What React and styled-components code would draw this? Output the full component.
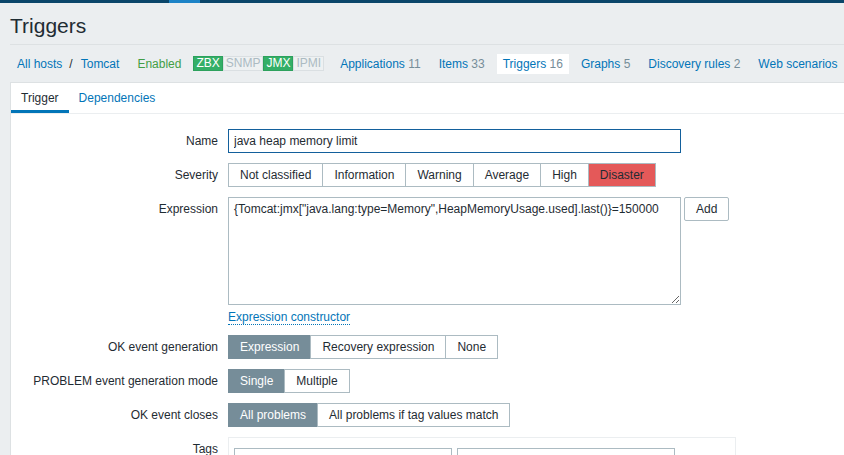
import styled, { createGlobalStyle } from "styled-components";

const GlobalStyle = createGlobalStyle`
* {
  box-sizing : border-box;
}
body {
  margin : 0;
  background-color : #ebeef0;
  font-family : "Liberation Sans", Arial, sans-serif;
  font-size : 12px;
  color : #1f2c33;
  overflow : hidden;
}
`

const TopBar = styled.div`
height : 3px;
background-color : #0a466a;
display : flex;

&::before {
  content : "";
  width : 31px;
  margin-left : 169px;
  background-color : #1c83c7;
}
`

const Header = styled.header`
margin-left : 10px;
padding : 11px 0 6px;
border-bottom : 1px solid #dde1e3;
`

const Title = styled.h1`
margin : 0;
font-size : 21px;
font-weight : normal;
line-height : 24px;
color : #1f2c33;
`

const HostNav = styled.nav`
margin-left : 10px;
height : 38px;
padding-left : 1px;
border-bottom : 1px solid #dde1e3;
display : flex;
align-items : center;
gap : 6px;
white-space : nowrap;
overflow : hidden;
`

const Crumbs = styled.div`
display : flex;
align-items : center;
`

const Sep = styled.span`
padding : 0 2px 0 1px;
color : #1f2c33;
`

const NavItem = styled.a`
display : block;
padding : 0 6px;
height : 20px;
line-height : 20px;
color : #0275b8;
text-decoration : none;
background-color : ${props => props.$active ? "#ffffff" : "transparent"};
`

const Count = styled.span`
color : #768d99;
`

const Status = styled.span`
padding : 0 6px;
color : #429e47;
`

const Badges = styled.div`
display : flex;
margin-right : 4px;
`

const Badge = styled.span`
height : 15px;
line-height : 13px;
padding : 0 2px;
border : 1px solid ${props => props.$on ? "#2da15d" : "#dadfe2"};
background-color : ${props => props.$on ? "#34af67" : "#eef1f2"};
color : ${props => props.$on ? "#ffffff" : "#acbbc2"};
`

const Panel = styled.div`
margin-left : 10px;
min-height : 400px;
background-color : #ffffff;
border-left : 1px solid #dde1e3;
`

const TabList = styled.ul`
display : flex;
margin : 0;
padding : 0;
list-style : none;
height : 31px;
border-bottom : 1px solid #ebeef0;
`

const Tab = styled.li`
padding : 0 10px;
height : 30px;
line-height : 30px;
color : ${props => props.$active ? "#1f2c33" : "#0275b8"};
box-shadow : ${props => props.$active ? "inset 0 -3px 0 #0275b8" : "none"};
`

const Form = styled.div`
padding-top : 15px;
display : grid;
grid-template-columns : 207px auto;
column-gap : 10px;
row-gap : 10px;
align-items : start;
`

const Label = styled.div`
text-align : right;
line-height : 24px;
white-space : nowrap;
`

const Field = styled.div`
display : flex;
flex-direction : column;
align-items : flex-start;
`

const TextBox = styled.input`
width : ${props => props.$width}px;
height : 24px;
padding : 0 5px;
border : 1px solid ${props => props.$focused ? "#13609c" : "#acbbc2"};
outline : none;
font : inherit;
color : #1f2c33;
background-color : #ffffff;
`

const ExpressionRow = styled.div`
display : flex;
align-items : flex-start;
gap : 3px;
`

const ExpressionArea = styled.textarea`
width : 453px;
height : 108px;
padding : 4px 5px;
border : 1px solid #acbbc2;
font : inherit;
line-height : 14px;
color : #1f2c33;
outline : none;
`

const Button = styled.button`
height : 24px;
padding : 0 11px;
border : 1px solid #acbbc2;
border-radius : 2px;
background-color : #ffffff;
font : inherit;
color : #1f2c33;
`

const Link = styled.a`
margin-top : 5px;
line-height : 14px;
color : #0275b8;
text-decoration : none;
border-bottom : 1px dotted #0275b8;
`

const Segmented = styled.div`
display : inline-flex;
`

const Segment = styled.span`
height : 24px;
line-height : 22px;
padding : 0 11px;
white-space : nowrap;
border : 1px solid ${props => props.$selected && !props.$bg ? "#768d99" : "#acbbc2"};
background-color : ${props => props.$bg ? props.$bg : props.$selected ? "#768d99" : "#ffffff"};
color : ${props => props.$selected && !props.$bg ? "#ffffff" : "#1f2c33"};

& + & {
  margin-left : -1px;
}
`

const TagsBox = styled.div`
width : 508px;
padding : 10px 5px;
border : 1px solid #ebeef0;
display : flex;
gap : 5px;
`

const severities = ["Not classified", "Information", "Warning", "Average", "High", "Disaster"];

function Radio ({options, selected, color}) {
  return (
    <Segmented>
      {options.map(option => (
        <Segment
          key={option}
          $selected={option === selected}
          $bg={option === selected ? color : undefined}
        >
          {option}
        </Segment>
      ))}
    </Segmented>
  );
}

function App () {
  return (
    <>
      <GlobalStyle />
      <TopBar />
      <Header>
        <Title>Triggers</Title>
      </Header>
      <HostNav>
        <Crumbs>
          <NavItem>All hosts</NavItem>
          <Sep>/</Sep>
          <NavItem>Tomcat</NavItem>
        </Crumbs>
        <Status>Enabled</Status>
        <Badges>
          <Badge $on>ZBX</Badge>
          <Badge>SNMP</Badge>
          <Badge $on>JMX</Badge>
          <Badge>IPMI</Badge>
        </Badges>
        <NavItem>Applications <Count>11</Count></NavItem>
        <NavItem>Items <Count>33</Count></NavItem>
        <NavItem $active>Triggers <Count>16</Count></NavItem>
        <NavItem>Graphs <Count>5</Count></NavItem>
        <NavItem>Discovery rules <Count>2</Count></NavItem>
        <NavItem>Web scenarios</NavItem>
      </HostNav>
      <Panel>
        <TabList>
          <Tab $active>Trigger</Tab>
          <Tab>Dependencies</Tab>
        </TabList>
        <Form>
          <Label>Name</Label>
          <Field>
            <TextBox $width={453} $focused defaultValue="java heap memory limit" />
          </Field>

          <Label>Severity</Label>
          <Field>
            <Radio options={severities} selected="Disaster" color="#e45959" />
          </Field>

          <Label>Expression</Label>
          <Field>
            <ExpressionRow>
              <ExpressionArea defaultValue={'{Tomcat:jmx["java.lang:type=Memory",HeapMemoryUsage.used].last()}=150000'} />
              <Button>Add</Button>
            </ExpressionRow>
            <Link>Expression constructor</Link>
          </Field>

          <Label>OK event generation</Label>
          <Field>
            <Radio options={["Expression", "Recovery expression", "None"]} selected="Expression" />
          </Field>

          <Label>PROBLEM event generation mode</Label>
          <Field>
            <Radio options={["Single", "Multiple"]} selected="Single" />
          </Field>

          <Label>OK event closes</Label>
          <Field>
            <Radio options={["All problems", "All problems if tag values match"]} selected="All problems" />
          </Field>

          <Label>Tags</Label>
          <Field>
            <TagsBox>
              <TextBox $width={218} />
              <TextBox $width={218} />
            </TagsBox>
          </Field>
        </Form>
      </Panel>
    </>
  );
}

export default App;
